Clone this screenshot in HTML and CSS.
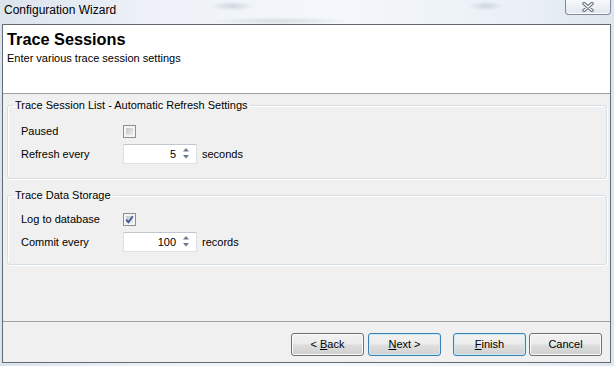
FILE: index.html
```html
<!DOCTYPE html>
<html lang="en">
<head>
<meta charset="utf-8">
<title>Configuration Wizard</title>
<link rel="stylesheet" href="styles.css">
</head>
<body>
<div class="window">
  <div class="titlebar">
    <span class="caption">Configuration Wizard</span>
    <div class="close-btn">
      <svg class="close-icon" width="12" height="10" viewBox="0 0 12 10">
        <path d="M2 1.5 L10 8.5 M10 1.5 L2 8.5" stroke="#5d6676" stroke-width="3.4" stroke-linecap="round"/>
        <path d="M2 1.5 L10 8.5 M10 1.5 L2 8.5" stroke="#fbfcfd" stroke-width="1.4" stroke-linecap="round"/>
      </svg>
    </div>
  </div>
  <div class="client">
    <div class="header">
      <h1 class="page-title">Trace Sessions</h1>
      <p class="page-subtitle">Enter various trace session settings</p>
    </div>
    <div class="content">
      <fieldset class="group group-refresh">
        <legend>Trace Session List - Automatic Refresh Settings</legend>
        <div class="rows">
          <span class="label">Paused</span>
          <span class="checkbox"></span>
          <span></span>
          <span class="label">Refresh every</span>
          <div class="spin">
            <span class="spin-value">5</span>
            <svg class="spin-arrows" width="6" height="18" viewBox="0 0 6 18">
              <polygon points="0,6.5 3,3 6,6.5" fill="#6a7891"/>
              <polygon points="0,10 3,13.5 6,10" fill="#6a7891"/>
            </svg>
          </div>
          <span class="unit">seconds</span>
        </div>
      </fieldset>
      <fieldset class="group group-storage">
        <legend>Trace Data Storage</legend>
        <div class="rows">
          <span class="label">Log to database</span>
          <span class="checkbox checked">
            <svg width="9" height="9" viewBox="0 0 9 9">
              <path d="M1.2 4.6 L3.4 7.2 L7.8 1.2" fill="none" stroke="#3f5a9c" stroke-width="1.8"/>
            </svg>
          </span>
          <span></span>
          <span class="label">Commit every</span>
          <div class="spin">
            <span class="spin-value">100</span>
            <svg class="spin-arrows" width="6" height="18" viewBox="0 0 6 18">
              <polygon points="0,6.5 3,3 6,6.5" fill="#6a7891"/>
              <polygon points="0,10 3,13.5 6,10" fill="#6a7891"/>
            </svg>
          </div>
          <span class="unit">records</span>
        </div>
      </fieldset>
    </div>
    <div class="footer">
      <button class="btn">&lt; <u>B</u>ack</button>
      <button class="btn btn-default btn-next"><u>N</u>ext &gt;</button>
      <button class="btn btn-default btn-finish"><u>F</u>inish</button>
      <button class="btn btn-cancel">Cancel</button>
    </div>
  </div>
</div>
</body>
</html>
```

FILE: styles.css
```css
html, body {
  margin: 0;
  padding: 0;
}

body {
  width: 614px;
  height: 366px;
  overflow: hidden;
  background:
    radial-gradient(ellipse 22px 5px at 232px 6px, rgba(120, 135, 155, 0.28), transparent),
    radial-gradient(ellipse 70px 4px at 280px 21px, rgba(110, 140, 120, 0.22), transparent),
    radial-gradient(ellipse 18px 5px at 486px 6px, rgba(120, 135, 155, 0.25), transparent),
    linear-gradient(90deg, #dbe3ed 0%, #eef2f8 25%, #f4f7fb 55%, #eaf0f6 85%, #dfe6ee 100%);
  font-family: "Liberation Sans", Arial, sans-serif;
  font-size: 11px;
  color: #000;
}

.window {
  display: flex;
  flex-direction: column;
  height: 366px;
}

.titlebar {
  height: 24px;
  flex: none;
  display: flex;
  justify-content: space-between;
  align-items: flex-start;
}

.caption {
  font-size: 12px;
  line-height: 15px;
  padding: 3px 0 0 4px;
}

.close-btn {
  width: 46px;
  height: 15px;
  box-sizing: border-box;
  margin-right: 3px;
  border: 1px solid #7d8a9b;
  border-top: none;
  border-radius: 0 0 4px 4px;
  background: linear-gradient(#f6f8fb, #e2e8ef);
  box-shadow: inset 0 -1px 0 #fff;
  display: flex;
  align-items: center;
  justify-content: center;
}

.client {
  flex: 1;
  margin: 0 3px 3px 2px;
  border: 1px solid #646a71;
  background: #f0f0f0;
  display: flex;
  flex-direction: column;
}

.header {
  height: 69px;
  flex: none;
  box-sizing: border-box;
  background: #fff;
  border-bottom: 1px solid #a0a0a0;
  padding: 5px 4px 0;
}

.page-title {
  margin: 0;
  font-size: 16.3px;
  line-height: 19px;
  font-weight: bold;
}

.page-subtitle {
  margin: 2px 0 0;
  font-size: 11px;
  line-height: 14px;
}

.content {
  flex: 1;
  padding: 4px 3px 0 4px;
}

.group {
  margin: 0;
  padding: 0;
  min-width: 0;
  border: 1px solid #d5dfe5;
  border-radius: 3px;
  box-shadow: inset 1px 1px 0 #fff, 1px 1px 0 #fff;
}

.group + .group {
  margin-top: 9px;
}

.group legend {
  margin-left: 5px;
  padding: 0 2px;
  font-size: 11px;
  line-height: 14px;
}

.rows {
  display: grid;
  grid-template-columns: 102px 79px auto;
  grid-auto-rows: 20px;
  row-gap: 3px;
  align-items: center;
  padding: 9px 13px 14px;
}

.group-storage .rows {
  padding-top: 7px;
  padding-bottom: 12px;
}

.label,
.unit {
  line-height: 14px;
}

.checkbox {
  width: 13px;
  height: 13px;
  box-sizing: border-box;
  border: 1px solid #8e8f8f;
  padding: 2px;
  background: linear-gradient(135deg, #c3c6cb, #ebeced) content-box, #f4f4f4 padding-box;
  position: relative;
}

.checkbox.checked svg {
  position: absolute;
  left: 1px;
  top: 1px;
}

.spin {
  width: 74px;
  height: 20px;
  box-sizing: border-box;
  border: 1px solid #dde1e6;
  border-top-color: #c3c6cc;
  background: #fff;
  display: flex;
  align-items: center;
}

.spin-value {
  flex: 1;
  text-align: right;
  line-height: 14px;
}

.spin-arrows {
  flex: none;
  margin: 0 7px 0 7px;
}

.footer {
  flex: none;
  border-top: 1px solid #a0a0a0;
  padding: 11px 8px 6px;
  display: flex;
  justify-content: flex-end;
}

.btn {
  width: 73px;
  height: 23px;
  box-sizing: border-box;
  margin: 0;
  padding: 0 0 1px;
  font-family: "Liberation Sans", Arial, sans-serif;
  font-size: 11px;
  color: #000;
  border: 1px solid #707070;
  border-radius: 3px;
  background: linear-gradient(#f2f2f2 0%, #ebebeb 48%, #dddddd 52%, #cfcfcf 100%);
  box-shadow: inset 0 0 0 1px #fbfbfb;
}

.btn-default {
  border-color: #3c7fb1;
  box-shadow: inset 0 0 0 1px #c8ecfc;
  background: linear-gradient(#f2f2f2 0%, #ececec 48%, #dfdfdf 52%, #d2d2d2 100%);
}

.btn-next {
  margin-left: 4px;
}

.btn-finish {
  margin-left: 12px;
}

.btn-cancel {
  margin-left: 3px;
}
```
